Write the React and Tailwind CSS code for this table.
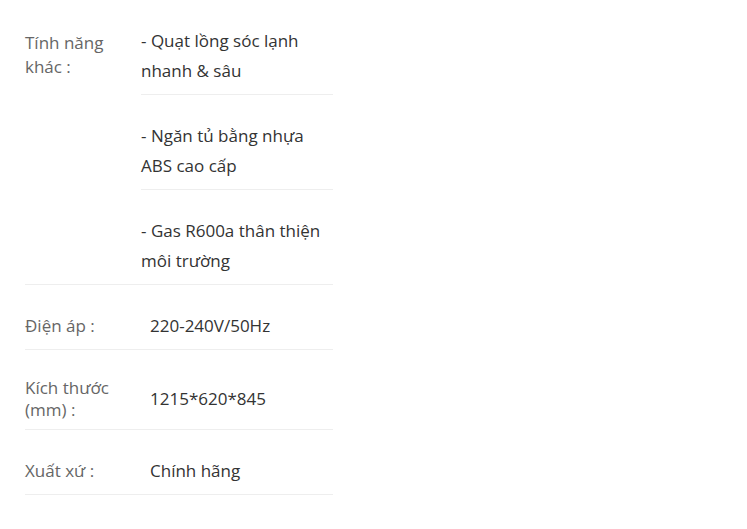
import React from "react";

const features = [
  ["- Quạt lồng sóc lạnh", "nhanh & sâu"],
  ["- Ngăn tủ bằng nhựa", "ABS cao cấp"],
  ["- Gas R600a thân thiện", "môi trường"],
];

const SpecRow = ({ label, value, height, labelTop, valueTop }) => {
  return (
    <div className={`flex items-start border-b border-[#eeeeee] ${height}`}>
      <div className={`w-[116px] shrink-0 leading-[22px] text-[#666666] ${labelTop}`}>{label}</div>
      <div className={`flex-1 pl-[9px] leading-[22px] text-[#333333] ${valueTop}`}>{value}</div>
    </div>
  );
};

const App = () => {
  return (
    <div className="min-h-screen bg-white pl-[25px] font-['Open_Sans',sans-serif] text-[17px]">
      <div className="w-[308px]">
        {/* features row: label + stacked list */}
        <div className="flex items-start border-b border-[#eeeeee]">
          <div className="w-[116px] shrink-0 pt-[31px] leading-[24px] text-[#666666]">
            Tính năng
            <br />
            khác :
          </div>
          <div className="flex-1">
            {features.map((f, i) => (
              <div
                key={i}
                className={`pt-[26px] pb-[8px] leading-[30px] text-[#333333] ${
                  i < features.length - 1 ? "border-b border-[#eeeeee]" : ""
                }`}
              >
                {f[0]}
                <br />
                {f[1]}
              </div>
            ))}
          </div>
        </div>

        <SpecRow label="Điện áp :" value="220-240V/50Hz" height="h-[65px]" labelTop="pt-[30px]" valueTop="pt-[30px]" />
        <SpecRow
          label={
            <>
              Kích thước
              <br />
              (mm) :
            </>
          }
          value="1215*620*845"
          height="h-[80px]"
          labelTop="pt-[27px]"
          valueTop="pt-[38px]"
        />
        <SpecRow label="Xuất xứ :" value="Chính hãng" height="h-[65px]" labelTop="pt-[30px]" valueTop="pt-[30px]" />
      </div>
    </div>
  );
};

export default App;
